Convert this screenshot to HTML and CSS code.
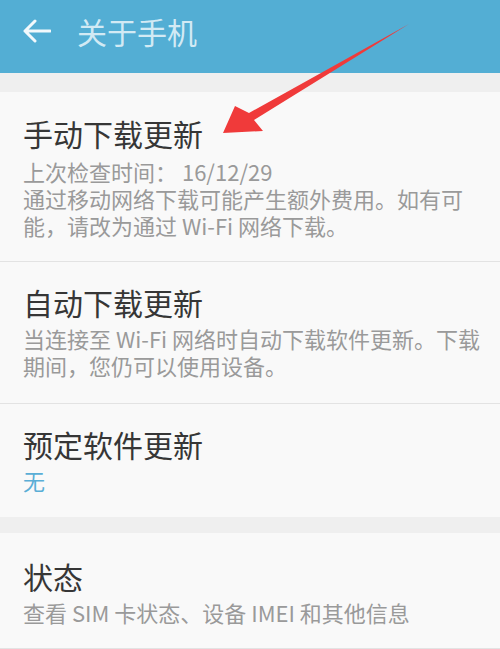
FILE: index.html
```html
<!DOCTYPE html>
<html lang="zh-CN">
<head>
    <meta charset="UTF-8">
    <meta name="viewport" content="width=device-width, initial-scale=1.0">
    <title>关于手机</title>
    <link rel="stylesheet" href="styles.css">
</head>
<body>
    <div class="page">
        <header class="app-bar">
            <svg class="back-icon" viewBox="0 0 28 24" width="28" height="24">
                <path d="M2 12H27M12 2L2 12L12 22" fill="none" stroke="#f2f9fc" stroke-width="3" stroke-linecap="round" stroke-linejoin="round"/>
            </svg>
            <h1 class="app-title">关于手机</h1>
        </header>

        <div class="group">
            <div class="item first">
                <div class="item-title">手动下载更新</div>
                <div class="item-sub">上次检查时间： 16/12/29<br>通过移动网络下载可能产生额外费用。如有可<br>能，请改为通过 Wi-Fi 网络下载。</div>
            </div>
            <div class="item second">
                <div class="item-title">自动下载更新</div>
                <div class="item-sub">当连接至 Wi-Fi 网络时自动下载软件更新。下载<br>期间，您仍可以使用设备。</div>
            </div>
            <div class="item third">
                <div class="item-title">预定软件更新</div>
                <div class="item-sub value">无</div>
            </div>
        </div>

        <div class="group">
            <div class="item fourth">
                <div class="item-title">状态</div>
                <div class="item-sub">查看 SIM 卡状态、设备 IMEI 和其他信息</div>
            </div>
        </div>

        <!-- red annotation arrow drawn over the screenshot -->
        <svg class="annotation" viewBox="0 0 500 649" width="500" height="649">
            <polygon points="223,133 235,106 249,113 409,24 254,120 263,131" fill="#f03a3a"/>
        </svg>
    </div>
</body>
</html>
```

FILE: styles.css
```css
body {
    margin: 0;
    font-family: "Noto Sans CJK SC", "Noto Sans", sans-serif;
    background-color: #efefef;
}

.page {
    position: relative;
    width: 500px;
    height: 649px;
    overflow: hidden;
    background-color: #efefef;
}

.app-bar {
    height: 73px;
    background-color: #53aed4;
    display: flex;
    align-items: center;
    padding-left: 23px;
    box-sizing: border-box;
}

.back-icon {
    display: block;
    margin-top: -12px;
}

.app-title {
    margin: -12px 0 0 26px;
    font-size: 30px;
    font-weight: normal;
    color: #d2eaf4;
    line-height: 36px;
}

.group {
    margin-top: 19px;
    background-color: #f9f9f9;
}

.group + .group {
    margin-top: 16px;
}

.item {
    padding: 25px 8px 22px 23px;
    border-bottom: 1px solid #e3e3e3;
}

.item.first {
    padding-top: 23px;
}

.item.second {
    padding-top: 22px;
    padding-bottom: 24px;
}

.item.third {
    border-bottom: none;
    padding-top: 22px;
    padding-bottom: 23px;
}

.item-title {
    font-size: 30px;
    line-height: 36px;
    color: #363636;
    margin-bottom: 5px;
}

.item.first .item-title {
    margin-bottom: 7px;
}

.item-sub {
    font-size: 22px;
    line-height: 27px;
    color: #9a9a9a;
}

.item-sub.value {
    color: #5aaed6;
}

.annotation {
    position: absolute;
    top: 0;
    left: 0;
    pointer-events: none;
}
```
